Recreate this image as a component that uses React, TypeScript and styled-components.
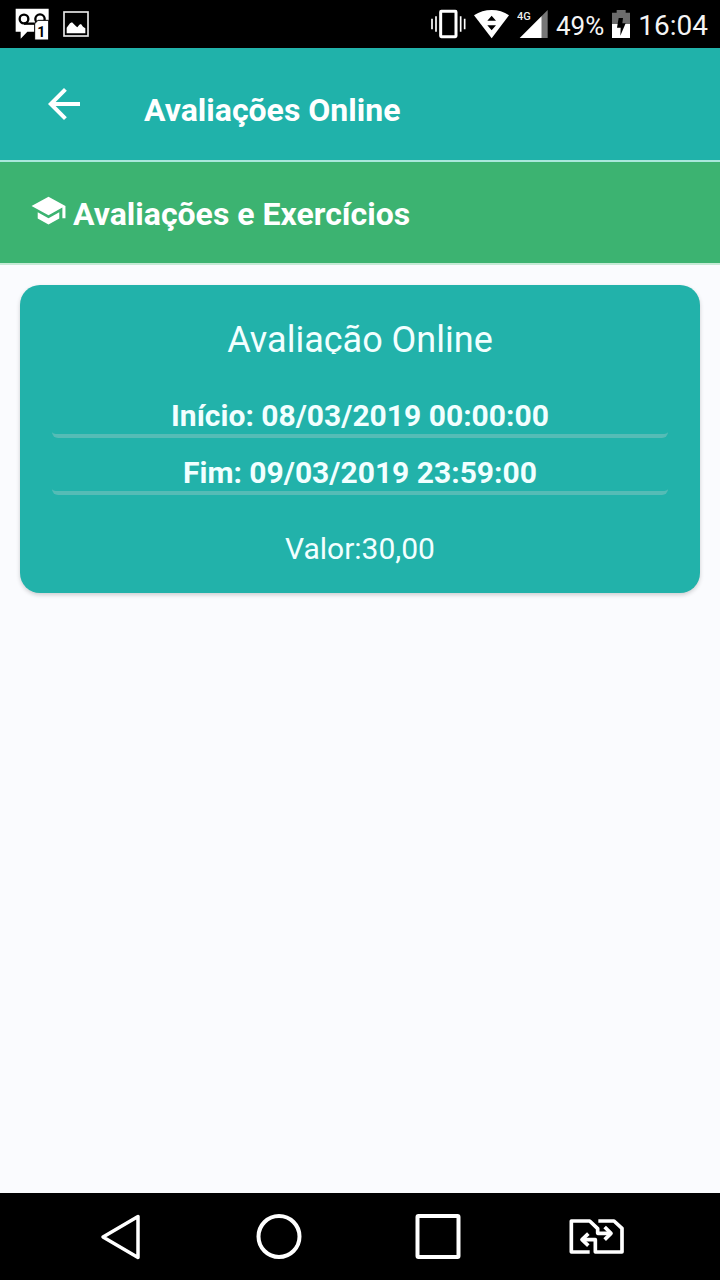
import React from "react";
import styled, { createGlobalStyle, css } from "styled-components";

const font = `Roboto, "Noto Sans", sans-serif`;

const GlobalStyle = createGlobalStyle`
  *, *::before, *::after { box-sizing: border-box; }
  body { margin: 0; background: #fafbfe; font-family: ${font}; }
  h1, h2, h3, p { margin: 0; }
  svg { display: block; flex: none; }
`;

const Screen = styled.div`
  display: flex;
  flex-direction: column;
  min-height: 100vh;
`;

const StatusBar = styled.div`
  display: flex;
  align-items: center;
  justify-content: space-between;
  height: 48px;
  padding: 0 12px 0 15px;
  background: #000;
  color: #fff;
`;

const StatusGroup = styled.div<{ $gap: number }>`
  display: flex;
  align-items: center;
  gap: ${(p) => p.$gap}px;
`;

const StatusText = styled.span<{ $size: number }>`
  font-size: ${(p) => p.$size}px;
  line-height: 32px;
  padding-top: 4px;
  color: #f4f4f4;
`;

const bar = css`
  display: flex;
  align-items: center;
  color: #fff;
`;

const Header = styled.header`
  ${bar}
  gap: 56px;
  padding: 32px 40px;
  background: #20b2aa;
  border-bottom: 2px solid #a9e8dc;
`;

const BackButton = styled.button`
  padding: 0;
  border: 0;
  background: none;
  color: inherit;
`;

const HeaderTitle = styled.h1`
  padding-top: 12px;
  font-size: 32px;
  line-height: 36px;
  font-weight: 700;
`;

const SectionBar = styled.div`
  ${bar}
  align-items: flex-start;
  gap: 6px;
  padding: 30px;
  background: #3cb371;
  border-bottom: 2px solid #c6ead6;
`;

const SectionTitle = styled.h2`
  padding-top: 3px;
  font-size: 32px;
  line-height: 38px;
  font-weight: 700;
`;

const Main = styled.main`
  flex: 1;
  padding: 20px;
`;

const Card = styled.article`
  padding: 37px 32px 26px;
  border-radius: 20px;
  background: #22b2aa;
  box-shadow: 0 2px 4px rgba(0, 0, 0, 0.18);
  color: #f2ffff;
  text-align: center;
`;

const CardTitle = styled.h3`
  overflow: hidden;
  margin-bottom: 42px;
  padding-top: 4px;
  font-size: 36px;
  line-height: 28px;
  font-weight: 400;
`;

const DateLine = styled.p`
  height: 42px;
  margin-bottom: 15px;
  border-bottom: 4px solid #55bcb6;
  border-radius: 6px;
  font-size: 30px;
  line-height: 40px;
  font-weight: 700;
`;

const Value = styled.p`
  padding-top: 21px;
  font-size: 30px;
  line-height: 36px;
`;

const NavBar = styled.nav`
  display: flex;
  height: 87px;
  padding: 0 44px 0 40px;
  background: #000;
`;

const NavButton = styled.button`
  display: flex;
  flex: 1;
  align-items: center;
  justify-content: center;
  padding: 0;
  border: 0;
  background: none;
  color: #fff;
`;

const VoicemailIcon = () => (
  <svg width="34" height="34" viewBox="45 21 102 102" aria-hidden="true">
    <path d="M47 26h99v69H82L62 116V95H47z" fill="#fff" />
    <g fill="none" stroke="#000" strokeWidth="7">
      <circle cx="72" cy="57" r="13" />
      <circle cx="120" cy="57" r="14" />
      <path d="M72 71h36" />
    </g>
    <path d="M114 61h32v59h-42V71z" fill="#fff" stroke="#000" strokeWidth="3" />
    <text x="124" y="110" fontSize="42" fontWeight="700" fontFamily={font} textAnchor="middle" fill="#000">1</text>
  </svg>
);

const PictureIcon = () => (
  <svg width="26" height="26" viewBox="189 32 78 78" aria-hidden="true">
    <rect x="192" y="35" width="72" height="72" fill="none" stroke="#e8e8e8" strokeWidth="5" />
    <path d="M200 99V82l10-13 6-3 12 12 4 3 6-8 5-2 6 8 7 5v15z" fill="#fff" />
  </svg>
);

const VibrateIcon = () => (
  <svg width="35" height="30" viewBox="32 27 105 90" aria-hidden="true">
    <path d="M35 56v32M47 49v46M121 49v46M133 56v32" stroke="#fff" strokeWidth="5" />
    <rect x="61" y="34" width="46" height="76" rx="2" fill="none" stroke="#fff" strokeWidth="9" />
  </svg>
);

const WifiIcon = () => (
  <svg width="35" height="30" viewBox="163 27 105 90" aria-hidden="true">
    <path d="M216 115 163 46Q187 30 216 30T268 46z" fill="#fff" />
    <path d="M216 47l13 15h-26zM216 91l13-15h-26z" fill="#000" />
  </svg>
);

const SignalIcon = () => (
  <svg width="31" height="30" viewBox="286 27 93 90" aria-hidden="true">
    <path d="M360 48 378 30v84h-18z" fill="#777" />
    <path d="M294 114 360 48v66z" fill="#fff" />
    <text x="286" y="59" fontSize="33" fontWeight="500" fontFamily={font} fill="#eee">4G</text>
  </svg>
);

const BatteryIcon = () => (
  <svg width="18" height="30" viewBox="126 27 54 90" aria-hidden="true">
    <path d="M126 38h14v-8h27v8h13v34h-54z" fill="#6d6d6d" />
    <path d="M126 72h54v42h-54z" fill="#fff" />
    <path d="M146 54h13l-2 16h10l-16 37 1-24h-11z" fill="#000" />
  </svg>
);

const BackArrow = () => (
  <svg width="48" height="48" viewBox="0 0 24 24" fill="currentColor" aria-hidden="true">
    <path d="M20 11H7.83l5.59-5.59L12 4l-8 8 8 8 1.41-1.41L7.83 13H20z" />
  </svg>
);

const SchoolIcon = () => (
  <svg width="37" height="37" viewBox="0 0 24 24" fill="currentColor" aria-hidden="true">
    <path d="M5 13.18v4L12 21l7-3.82v-4L12 17zM12 3 1 9l11 6 9-4.91V17h2V9z" />
  </svg>
);

const stroke = { fill: "none", stroke: "currentColor", strokeWidth: 4 } as const;

const BackKey = () => (
  <svg width="40" height="46" viewBox="0 0 40 46" aria-hidden="true">
    <path d="M38 2.5v41L3 23z" {...stroke} strokeWidth={3.5} strokeLinejoin="round" />
  </svg>
);

const HomeKey = () => (
  <svg width="46" height="46" viewBox="0 0 46 46" aria-hidden="true">
    <circle cx="23" cy="22.5" r="20.5" {...stroke} />
  </svg>
);

const RecentKey = () => (
  <svg width="46" height="46" viewBox="0 0 46 46" aria-hidden="true">
    <rect x="2.5" y="2" width="41" height="41" rx="1" {...stroke} />
  </svg>
);

const SimSwapKey = () => (
  <svg width="56" height="36" viewBox="510 102 168 108" aria-hidden="true">
    <g {...stroke} strokeWidth={11} strokeLinejoin="round">
      <path d="M572 201H517V108h55l24 23v14h39" />
      <path d="M598 108h47l24 22v71h-80v-37h-38" />
      <path d="M617 126l19 19-19 19M568 146l-19 18 19 18" />
    </g>
  </svg>
);

export default function App() {
  return (
    <>
      <GlobalStyle />
      <Screen>
        <StatusBar>
          <StatusGroup $gap={14}>
            <VoicemailIcon />
            <PictureIcon />
          </StatusGroup>
          <StatusGroup $gap={8}>
            <VibrateIcon />
            <WifiIcon />
            <SignalIcon />
            <StatusText $size={26}>49%</StatusText>
            <BatteryIcon />
            <StatusText $size={28}>16:04</StatusText>
          </StatusGroup>
        </StatusBar>

        <Header>
          <BackButton type="button" aria-label="Voltar">
            <BackArrow />
          </BackButton>
          <HeaderTitle>Avaliações Online</HeaderTitle>
        </Header>

        <SectionBar>
          <SchoolIcon />
          <SectionTitle>Avaliações e Exercícios</SectionTitle>
        </SectionBar>

        <Main>
          <Card>
            <CardTitle>Avaliação Online</CardTitle>
            <DateLine>Início: 08/03/2019 00:00:00</DateLine>
            <DateLine>Fim: 09/03/2019 23:59:00</DateLine>
            <Value>Valor:30,00</Value>
          </Card>
        </Main>

        <NavBar aria-label="Sistema">
          <NavButton type="button" aria-label="Voltar">
            <BackKey />
          </NavButton>
          <NavButton type="button" aria-label="Início">
            <HomeKey />
          </NavButton>
          <NavButton type="button" aria-label="Recentes">
            <RecentKey />
          </NavButton>
          <NavButton type="button" aria-label="Trocar SIM">
            <SimSwapKey />
          </NavButton>
        </NavBar>
      </Screen>
    </>
  );
}
